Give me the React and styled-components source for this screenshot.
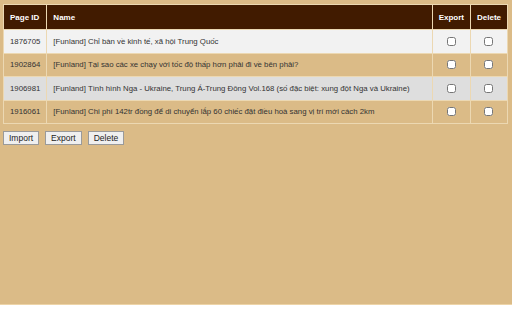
import React from 'react';
import styled, { createGlobalStyle } from 'styled-components';

const Global = createGlobalStyle`
  body {
    margin: 0;
    background: #ffffff;
    font-family: "Liberation Sans", Arial, sans-serif;
  }
`;

const Page = styled.div`
  height: 305px;
  box-sizing: border-box;
  background: #dbbb87;
  border-bottom: 1px solid #edd4a8;
  padding: 4px 4px 0 3px;
`;

const Table = styled.table`
  width: 100%;
  border-collapse: collapse;
  border: 1px solid #ecd8b2;
  font-size: 7.8px;
`;

const Th = styled.th`
  background-color: #411b00;
  color: #ffffff;
  font-weight: bold;
  font-size: 8px;
  height: 25px;
  padding: 0 6px;
  text-align: ${p => (p.$center ? 'center' : 'left')};
  border: 1px solid #ecd8b2;
  width: ${p => p.$w || 'auto'};
  box-sizing: border-box;
`;

const Tr = styled.tr`
  background-color: ${p => p.$bg || 'transparent'};
`;

const Td = styled.td`
  padding: 0 6px;
  height: 22.5px;
  color: #333333;
  border: 1px solid #ecd8b2;
  text-align: ${p => (p.$center ? 'center' : 'left')};
  white-space: nowrap;
`;

const Check = styled.input`
  width: 9px;
  height: 9px;
  margin: 0;
  vertical-align: middle;
`;

const Buttons = styled.div`
  display: flex;
  gap: 6px;
  margin-top: 7px;
`;

const Button = styled.button`
  font-family: "Liberation Sans", Arial, sans-serif;
  font-size: 8.5px;
  color: #222;
  background: #efefef;
  border: 1px solid #9a9a9a;
  padding: 1px 5px;
  height: 14px;
  line-height: 10px;
  border-radius: 0;
`;

const rows = [
  { id: '1876705', name: '[Funland] Chỉ bàn về kinh tế, xã hội Trung Quốc', bg: '#f2f2f2' },
  { id: '1902864', name: '[Funland] Tại sao các xe chạy với tốc độ thấp hơn phải đi về bên phải?' },
  { id: '1906981', name: '[Funland] Tình hình Nga - Ukraine, Trung Á-Trung Đông Vol.168 (số đặc biệt: xung đột Nga và Ukraine)', bg: '#dedede' },
  { id: '1916061', name: '[Funland] Chi phí 142tr đồng để di chuyển lắp 60 chiếc đặt điều hoà sang vị trí mới cách 2km' },
];

export default function App() {
  return (
    <>
      <Global />
      <Page>
        <Table>
          <thead>
            <tr>
              <Th $w="43px">Page ID</Th>
              <Th>Name</Th>
              <Th $center $w="38px">Export</Th>
              <Th $center $w="37px">Delete</Th>
            </tr>
          </thead>
          <tbody>
            {rows.map(r => (
              <Tr key={r.id} $bg={r.bg}>
                <Td>{r.id}</Td>
                <Td>{r.name}</Td>
                <Td $center><Check type="checkbox" /></Td>
                <Td $center><Check type="checkbox" /></Td>
              </Tr>
            ))}
          </tbody>
        </Table>
        <Buttons>
          <Button>Import</Button>
          <Button>Export</Button>
          <Button>Delete</Button>
        </Buttons>
      </Page>
    </>
  );
}
